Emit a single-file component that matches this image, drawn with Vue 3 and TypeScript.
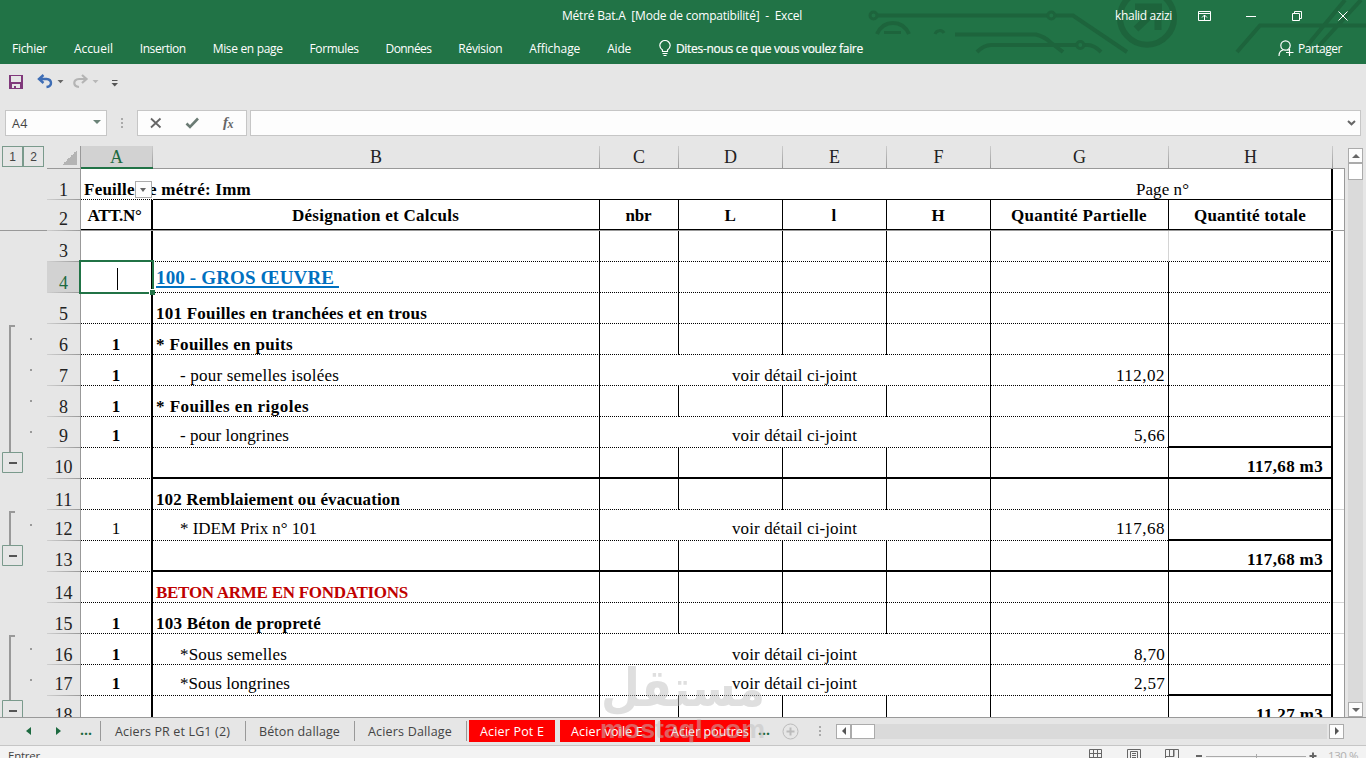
<script setup lang="ts">
import type { Directive } from 'vue'

// Spreads a label over the given width in pixels.
const vFit: Directive<HTMLElement, number> = {
  mounted(el, { value }) {
    if (!value) return
    const n = (el.textContent ?? '').length
    el.style.letterSpacing = `${(value - el.getBoundingClientRect().width) / n}px`
  },
}

interface Label { text: string; w: number }
interface Row {
  n: number
  a?: string
  aThin?: boolean
  b?: Label
  kind?: string
  merged?: boolean
  g?: Label
  h?: Label
  low?: boolean
  close?: boolean
  sum?: boolean
  tick?: boolean
}

const menus: Label[] = [
  { text: 'Fichier', w: 35 }, { text: 'Accueil', w: 39 }, { text: 'Insertion', w: 46 },
  { text: 'Mise en page', w: 70 }, { text: 'Formules', w: 49 }, { text: 'Données', w: 46 },
  { text: 'Révision', w: 44 }, { text: 'Affichage', w: 51 }, { text: 'Aide', w: 24 },
]
const columns = ['A', 'B', 'C', 'D', 'E', 'F', 'G', 'H']
const heads: Label[] = [
  { text: 'ATT.N°', w: 54 }, { text: 'Désignation et Calculs', w: 167 }, { text: 'nbr', w: 26 },
  { text: 'L', w: 11 }, { text: 'l', w: 5 }, { text: 'H', w: 13 },
  { text: 'Quantité Partielle', w: 136 }, { text: 'Quantité totale', w: 112 },
]
const rows: Row[] = [
  { n: 3 },
  { n: 4, b: { text: '100 - GROS ŒUVRE ', w: 183 }, kind: 'title' },
  { n: 5, b: { text: '101 Fouilles en tranchées et en trous', w: 271 }, kind: 'bold', tick: true },
  { n: 6, a: '1', b: { text: '* Fouilles en puits', w: 137 }, kind: 'bold', tick: true },
  { n: 7, a: '1', b: { text: '- pour semelles isolées', w: 159 }, kind: 'sub', merged: true, g: { text: '112,02', w: 49 }, tick: true },
  { n: 8, a: '1', b: { text: '* Fouilles en rigoles', w: 153 }, kind: 'bold', tick: true },
  { n: 9, a: '1', b: { text: '- pour longrines', w: 109 }, kind: 'sub', merged: true, g: { text: '5,66', w: 31 }, low: true, sum: true },
  { n: 10, h: { text: '117,68 m3', w: 76 }, low: true, close: true },
  { n: 11, b: { text: '102 Remblaiement ou évacuation', w: 244 }, kind: 'bold', tick: true },
  { n: 12, a: '1', aThin: true, b: { text: '* IDEM Prix n° 101', w: 137 }, kind: 'sub', merged: true, g: { text: '117,68', w: 49 }, low: true, sum: true },
  { n: 13, h: { text: '117,68 m3', w: 76 }, low: true, close: true },
  { n: 14, b: { text: 'BETON ARME EN FONDATIONS', w: 252 }, kind: 'red', tick: true },
  { n: 15, a: '1', b: { text: '103 Béton de propreté', w: 165 }, kind: 'bold', tick: true },
  { n: 16, a: '1', b: { text: '*Sous semelles', w: 107 }, kind: 'sub', merged: true, g: { text: '8,70', w: 31 }, tick: true },
  { n: 17, a: '1', b: { text: '*Sous longrines', w: 110 }, kind: 'sub', merged: true, g: { text: '2,57', w: 31 }, low: true, sum: true },
  { n: 18, h: { text: '11,27 m3', w: 67 }, low: true },
]
const tabs: Label[] = [
  { text: 'Aciers PR et LG1 (2)', w: 115 }, { text: 'Béton dallage', w: 81 }, { text: 'Aciers Dallage', w: 84 },
]
const redTabs: Label[] = [
  { text: 'Acier Pot E', w: 64 }, { text: 'Acier voile E', w: 72 }, { text: 'Acier poutres', w: 78 },
]
</script>

<template>
  <div class="app">
    <header class="ribbon">
      <svg class="circuit" width="506" height="64" viewBox="860 0 506 64">
        <g fill="none" stroke="#1d643c" stroke-width="4">
          <circle cx="873.5" cy="15.5" r="3.5" stroke-width="3" />
          <path d="M878 15.5H1047M1056 15.5H1073L1127 52" />
          <circle cx="1051.300" cy="15.500" r="3.500" stroke-width="3" />
          <path d="M877 34Q882 23 893 23T909 34" />
          <path d="M884 32.500H901M935 34A5 5 0 0 1 944 33" stroke-width="3" />
          <path d="M955 34.500H1036Q1045 37 1050 42L1063 52M977 52Q984 45 991 45H1076M1084 45H1088Q1094 45 1101 52" />
          <circle cx="1080.300" cy="45" r="3.500" stroke-width="3" />
          <path d="M1131 -4A27 27 0 1 0 1163 -4" stroke-width="6" />
          <path d="M1135 7H1162M1158 4V30M1157 9L1136 29" stroke-width="7" />
          <path d="M1237 52L1260 25.500H1366M1345 0L1306 47M1361 0L1318 47" />
        </g>
      </svg>
      <div class="titlebar">
        <div class="doc"><span v-fit="240">Métré Bat.A&nbsp; [Mode de compatibilité]&nbsp; -&nbsp; Excel</span></div>
        <div class="user"><span v-fit="57">khalid azizi</span></div>
        <svg class="win" width="170" height="30" viewBox="1190 0 170 30" fill="none" stroke="#fff">
          <path d="M1198.500 10.500H1210.500V19.500H1198.500ZM1198.500 12.500H1210.500M1204.500 19V14M1202 16.500L1204.500 14L1207 16.500" />
          <path d="M1246 15.500H1256M1292.500 12.500H1299.500V19.500H1292.500ZM1294.500 12V10.500H1301.500V17.500H1300M1338.500 10.500L1347.500 19.500M1347.500 10.500L1338.500 19.500" />
        </svg>
      </div>
      <nav class="menu">
        <span v-for="m in menus" :key="m.text" v-fit="m.w">{{ m.text }}</span>
        <svg class="bulb" width="12" height="17" viewBox="0 0 12 17" fill="none" stroke="#fff" stroke-width="1.200">
          <path d="M3.500 11.500V10Q.8 8 .8 5.500A5.200 5 0 0 1 11.200 5.500Q11.200 8 8.500 10V11.500ZM3.500 13.500H8.500M4.500 15.500H7.500" />
        </svg>
        <span class="ask" v-fit="187">Dites-nous ce que vous voulez faire</span>
        <svg class="person" width="16" height="17" viewBox="0 0 16 17" fill="none" stroke="#fff" stroke-width="1.200">
          <circle cx="7.500" cy="5.500" r="4.700" /><path d="M1 16Q1 11 5 10M9.500 9.800L10.500 10.500M11.500 9V16M8 12.500H15.500" />
        </svg>
        <span v-fit="44">Partager</span>
      </nav>
    </header>

    <div class="quick">
      <svg width="125" height="24" viewBox="0 70 125 24" fill="none">
        <path d="M9 75H23V89H9ZM11 76V82H21V76ZM12 84V88H14V86H16V88H20V84Z" fill="#80397b" fill-rule="evenodd" />
        <path d="M43.500 75L39 79L43.500 83M39.500 79H46.500Q51 79.500 51 83Q51 86.500 46.500 87" stroke="#3e6db5" stroke-width="2.400" />
        <path d="M57.500 80H63.500L60.500 83.200Z" fill="#666" />
        <path d="M82 75L86.500 79L82 83M86 79H79Q74.300 79.500 74.300 83Q74.300 86.500 79 87" stroke="#b4b4b4" stroke-width="2.200" />
        <path d="M92.500 80H98.500L95.500 83.200Z" fill="#b8b8b8" />
        <path d="M112 80.500H117.500" stroke="#555" /><path d="M111.500 83H118L114.700 86.500Z" fill="#555" />
      </svg>
    </div>

    <div class="formula">
      <div class="namebox"><span v-fit="16">A4</span><i class="caret"></i></div>
      <div class="grip"><i></i><i></i><i></i></div>
      <div class="fx">
        <svg width="108" height="24" viewBox="138 111 108 24" fill="none" stroke="#666">
          <path d="M151 118.500L160.500 127.500M160.500 118.500L151 127.500" stroke-width="1.800" />
          <path d="M186.500 123.500L190 127L198 118.500" stroke="#6b7b74" stroke-width="2.600" />
          <text x="223" y="127" class="fxt">f</text><text x="227.500" y="128" class="fxs">x</text>
        </svg>
      </div>
      <div class="input">
        <svg width="9" height="6" viewBox="0 0 9 6" fill="none" stroke="#666" stroke-width="2"><path d="M1 1L4.500 4.300L8 1" /></svg>
      </div>
    </div>

    <main class="work">
      <aside class="outline">
        <div class="levels"><span>1</span><span>2</span></div>
        <svg width="47" height="549" viewBox="0 168 47 549" fill="none">
          <path d="M0 230.500H47" stroke="#999" />
          <path d="M15 326H10V452M15 512H10V545M15 636H10V700" stroke="#999" stroke-width="2" />
          <path d="M30 339h2M30 370h2M30 401h2M30 432h2M30 525h2M30 649h2M30 680h2" stroke="#999" stroke-width="2" />
          <g fill="#e6e6e6" stroke="#7a9a8c"><path d="M2.500 452.500H22.500V472.500H2.500ZM2.500 545.500H22.500V565.500H2.500ZM2.500 700.500H22.500V720.500H2.500Z" /></g>
          <path d="M9 463H17M9 556H17M9 711H17" stroke="#555" stroke-width="2" />
        </svg>
      </aside>

      <div class="sheet">
        <div class="line colheads">
          <div class="corner"></div>
          <div v-for="c in columns" :key="c" class="colhead" :class="{ active: c === 'A' }">{{ c }}</div>
          <div></div>
        </div>
        <div class="line first">
          <div class="num">1</div>
          <div class="cell dot overflow bold">
            <span v-fit="167">Feuille de métré: Imm</span>
            <i class="filter"></i>
          </div>
          <div class="cell pageno"><span v-fit="53">Page n°</span></div>
          <div class="cell edge tick"></div>
        </div>
        <div class="line second">
          <div class="num">2</div>
          <div v-for="(h, i) in heads" :key="i" class="cell bold mid r" :class="{ thick: i === 0 || i === 7 }">
            <span v-fit="h.w">{{ h.text }}</span>
          </div>
          <div class="cell edge"></div>
        </div>
        <div v-for="r in rows" :key="r.n" class="line" :class="{ low: r.low }">
          <div class="num" :class="{ active: r.n === 4, n3: r.n === 3 }">{{ r.n }}</div>
          <div class="cell dot r thick mid" :class="{ bold: !r.aThin }">
            <span>{{ r.a }}</span>
            <i v-if="r.n === 4" class="selection"></i>
          </div>
          <div class="cell r" :class="[r.kind, r.close ? 'rule' : 'dot']"><span v-if="r.b" v-fit="r.b.w">{{ r.b.text }}</span></div>
          <div v-if="r.merged" class="cell r dot mid span4"><span v-fit="125">voir détail ci-joint</span></div>
          <template v-else>
            <div v-for="k in 4" :key="k" class="cell r" :class="r.close ? 'rule' : 'dot'"></div>
          </template>
          <div class="cell r right" :class="[r.close ? 'rule' : 'dot', { pale: r.n === 3 }]"><span v-if="r.g" v-fit="r.g.w">{{ r.g.text }}</span></div>
          <div class="cell r thick right bold total" :class="r.close || r.sum ? 'rule' : 'dot'"><span v-if="r.h" v-fit="r.h.w">{{ r.h.text }}</span></div>
          <div class="cell edge" :class="{ tick: r.tick }"></div>
        </div>
      </div>

      <div class="vscroll">
        <div class="btn"><i class="up"></i></div>
        <div class="thumb"></div>
        <div class="space"></div>
        <div class="btn"><i class="down"></i></div>
      </div>
    </main>

    <div class="tabs">
      <div class="arrows"><i class="prev"></i><i class="next"></i><b>...</b></div>
      <div v-for="t in tabs" :key="t.text" class="tab"><span v-fit="t.w">{{ t.text }}</span></div>
      <div class="reds">
        <div v-for="t in redTabs" :key="t.text" class="redtab"><span v-fit="t.w">{{ t.text }}</span></div>
      </div>
      <b class="more">...</b>
      <svg class="add" width="17" height="17" viewBox="0 0 17 17" fill="none" stroke="#bbb"><circle cx="8.500" cy="8.500" r="7.500" /><path d="M4.500 8.500H12.500M8.500 4.500V12.500" stroke-width="2" /></svg>
      <div class="grip"><i></i><i></i><i></i></div>
      <div class="hscroll">
        <div class="btn"><i class="left"></i></div>
        <div class="hthumb"></div>
        <div class="space"></div>
        <div class="btn"><i class="rightarrow"></i></div>
      </div>
    </div>

    <footer class="status">
      <span v-fit="32">Entrer</span>
      <svg width="235" height="13" viewBox="1085 746 235 13" fill="none" stroke="#666">
        <path d="M1089.500 749.500H1101.500V760M1089.500 749.500V760M1089.500 753.500H1101.500M1089.500 757.500H1101.500M1093.500 749V760M1097.500 749V760" />
        <path d="M1127.500 760V749.500H1140.500V760M1130.500 760V751.500H1137.500V760M1132 753.500H1136M1132 755.500H1136M1132 757.500H1136" />
        <path d="M1165.500 760V749.500H1178.500V760M1169.500 749V756.500M1173.500 749V756.500M1165.500 756.500H1174M1174 756.500V749" />
        <path d="M1196 756H1202M1309.500 756H1316.500M1313 752.500V760" stroke-width="2" />
        <path d="M1206 756.500H1306M1256.500 754V759" stroke="#aaa" />
      </svg>
      <span class="zoom" v-fit="30">130 %</span>
    </footer>

    <svg class="mark" width="170" height="90" viewBox="598 660 170 90">
      <text class="arabic" x="601" y="706" textLength="164" lengthAdjust="spacingAndGlyphs">مستقل</text>
      <text class="latin" x="600" y="738" textLength="165" lengthAdjust="spacingAndGlyphs">mostaql.com</text>
    </svg>
  </div>
</template>

<style>
body { margin: 0; overflow: hidden; }
</style>

<style scoped>
* { box-sizing: border-box; }
.app { position: relative; width: 1366px; height: 758px; overflow: hidden; display: flex; flex-direction: column; background: #e6e6e6; font: 12px "Open Sans", "Noto Sans", sans-serif; color: #444; }
.app span { white-space: pre; }
svg { display: block; flex: none; }
.ribbon { position: relative; height: 64px; background: #217346; color: #fff; flex: none; }
.circuit { position: absolute; right: 0; top: 0; }
.titlebar { position: relative; display: flex; align-items: center; height: 31px; padding-right: 6px; }
.doc { width: 553px; margin-left: 562px; }
.user { width: 75px; }
.menu { position: relative; display: flex; align-items: center; gap: 26.900px; height: 36px; padding: 0 24px 2px 12px; }
.bulb { margin: 0 -21.500px 0 .500px; }
.ask { margin-right: auto; -webkit-text-stroke: .2px #fff; }
.person { margin-right: -23px; }
.quick { height: 46px; padding-top: 6px; flex: none; }
.formula { display: flex; height: 26px; padding: 0 5px; flex: none; }
.namebox, .fx, .input { background: #fdfdfd; border: 1px solid #c6c6c6; }
.namebox { width: 102px; display: flex; align-items: center; justify-content: space-between; padding: 0 5px 0 6px; font-size: 12.500px; }
.caret { border: 4px solid transparent; border-top-color: #6b8378; border-bottom: 0; margin-bottom: 2px; }
.grip { width: 30px; display: flex; flex-direction: column; align-items: center; justify-content: center; gap: 2px; }
.grip i { width: 2px; height: 2px; background: #aaa; }
.fx { width: 110px; margin-right: 3px; }
.fxt, .fxs { font-family: "Liberation Serif", serif; font-style: italic; font-weight: bold; fill: #666; stroke: none; }
.fxt { font-size: 15px; }
.fxs { font-size: 12px; }
.input { flex: 1; display: flex; align-items: center; justify-content: flex-end; padding-right: 4px; }
.work { display: flex; height: 582px; padding-top: 10px; overflow: hidden; border-bottom: 1px solid #999; flex: none; }
.outline { width: 47px; flex: none; }
.levels { height: 22px; padding-left: 2px; display: flex; }
.levels span { width: 21px; height: 21px; border: 1px solid #7a9a8c; text-align: center; line-height: 20px; font-family: "Liberation Sans", sans-serif; font-size: 12px; }
.sheet { width: 1298px; flex: none; font: 17px "Liberation Serif", serif; color: #000; }
.line { display: grid; grid-template-columns: 34px 72px 447px 79px 104px 104px 104px 178px 164px 12px; grid-template-rows: 100%; height: 31px; }
.colheads { height: 23px; }
.corner { border-right: 1px solid #999; border-bottom: 1px solid #999; background: linear-gradient(135deg, transparent 50%, #b4b4b4 50%) 15px 4px / 15px 15px no-repeat; }
.colhead { border-bottom: 1px solid #999; text-align: center; font-size: 18px; line-height: 22px; padding-right: 1px; color: #222; background: linear-gradient(#ccc, #999) right / 1px 100% no-repeat; }
.colhead.active { border-bottom: 2px solid #217346; background-color: #d2d2d2; color: #1d6a40; }
.colheads > :last-child { border-bottom: 1px solid #999; }
.num { border-right: 1px solid #999; font-size: 18px; line-height: 20px; display: flex; justify-content: center; align-items: flex-end; color: #222; background: linear-gradient(90deg, #d0d0d0, #999) bottom / 100% 1px no-repeat; }
.num.active { background-color: #d2d2d2; color: #1d6a40; }
.num.n3 { padding-bottom: 1px; }
.low .num { padding-bottom: 2px; }
.cell { position: relative; min-width: 0; display: flex; align-items: flex-end; padding: 0 4px 0 3px; line-height: 20px; background: #fff; white-space: pre; --rule: 1px; --ink: #000; }
.low .cell { padding-bottom: 2px; }
.dot::before { content: ""; position: absolute; left: 0; right: 0; bottom: 0; height: 1px; background: repeating-linear-gradient(90deg, #000 0 1px, #fff 1px 2px); }
.rule::before { content: ""; position: absolute; left: 0; right: 0; bottom: 0; height: 2px; background: #000; }
.r::after { content: ""; position: absolute; right: 0; top: 0; bottom: 0; width: var(--rule); background: var(--ink); }
.thick { --rule: 2px; }
.pale { --ink: #d4d4d4; }
.cell.mid { justify-content: center; padding-right: 5px; }
.right { justify-content: flex-end; padding-right: 4px; }
.cell.total { padding-right: 10px; }
.bold, .title, .red { font-weight: bold; }
.span4 { grid-column: span 4; }
.cell.sub { padding-left: 27px; }
.cell.title { color: #0070c0; font-size: 19px; padding-bottom: 5px; }
.title span { border-bottom: 2px solid #0070c0; line-height: 16px; }
.cell.red { color: #c00000; }
.cell.edge { border-right: 1px solid #999; padding: 0; }
.cell.tick { background: linear-gradient(#d4d4d4, #d4d4d4) bottom / 100% 1px no-repeat #fff; }
.overflow { overflow: visible; z-index: 2; }
.cell.pageno { grid-column: span 7; border-bottom: 1px solid #000; border-right: 2px solid #000; justify-content: flex-end; padding-right: 142px; line-height: 18px; }
.filter { position: absolute; left: 54px; top: 12px; width: 17px; height: 17px; background: #fdfdfd; border: 1px solid #ababab; }
.filter::after { content: ""; position: absolute; left: 4px; top: 6px; border: 3.500px solid transparent; border-top: 4px solid #666; border-bottom: 0; }
.second .cell { padding-bottom: 4px; border-bottom: 1px solid #999; box-shadow: inset 0 -1px #000; }
.second .cell.edge { box-shadow: none; }
.second .cell:nth-child(2) { padding-right: 8px; }
.second .num { padding-bottom: 2px; }
.selection { position: absolute; left: -2px; top: -2px; width: 75px; height: 34px; border: 2px solid #217346; z-index: 3; }
.selection::before { content: ""; position: absolute; left: 36px; top: 6px; width: 1px; height: 22px; background: #000; }
.selection::after { content: ""; position: absolute; right: -3px; bottom: -3px; width: 5px; height: 5px; background: #217346; box-shadow: -1px -1px #fff; }
.vscroll { margin: 2px 3px 0 3px; width: 15px; display: flex; flex-direction: column; }
.btn { width: 15px; height: 15px; flex: none; background: #fdfdfd; border: 1px solid #ababab; display: flex; align-items: center; justify-content: center; }
.thumb { height: 17px; background: #fff; border: 1px solid #ababab; }
.space { flex: 1; background: #dadada; }
.up, .down { border: 4px solid transparent; }
.up { border-bottom: 4px solid #666; border-top: 0; }
.down { border-top: 4px solid #666; border-bottom: 0; }
.left, .rightarrow, .prev, .next { border: 4px solid transparent; }
.left { border-right-color: #555; border-left: 0; }
.rightarrow { border-left-color: #555; border-right: 0; }
.tabs { height: 28px; display: flex; align-items: center; padding-bottom: 1px; border-bottom: 1px solid #c6c6c6; flex: none; font-size: 12.500px; }
.arrows { width: 101px; height: 20px; display: flex; align-items: center; padding-left: 26px; border-right: 1px solid #999; }
.prev { border-right: 5px solid #1d6a40; border-left: 0; margin-right: 25px; }
.next { border-left: 5px solid #1d6a40; border-right: 0; margin-right: 19px; }
.arrows b, .more { color: #1d6a40; font-size: 14px; line-height: 14px; margin-bottom: 3px; }
.tab { height: 20px; padding: 0 15px 0 14px; border-right: 1px solid #999; display: flex; align-items: center; }
.tab + .tab { padding: 0 14px 0 13px; }
.reds { display: flex; width: 282px; overflow: hidden; margin-left: 2px; }
.redtab { height: 22px; background: #f00; color: #fff; padding: 0 11px; display: flex; align-items: center; flex: none; margin-right: 5px; position: relative; }
.redtab:nth-child(2) { padding-right: 12px; }
.redtab:last-child { width: 90px; padding-right: 0; }
.more { margin-left: 7px; width: 24px; }
.add { margin-right: 5px; }
.tabs .grip { width: 32px; }
.hscroll { display: flex; width: 508px; height: 15px; }
.hthumb { width: 24px; background: #fff; border: 1px solid #ababab; }
.hscroll .space { margin-right: 2px; }
.status { height: 13px; background: #f3f3f3; display: flex; padding: 0 8px; font-size: 11.500px; line-height: 19px; flex: none; overflow: hidden; justify-content: space-between; }
.status span { display: block; }
.status svg { margin-left: auto; margin-right: 8px; }
.zoom { color: #b0b0b0; }
.mark { position: absolute; left: 598px; top: 660px; opacity: .5; z-index: 5; }
.mark text { fill: #c0c0c0; }
.arabic { font: bold 52px "DejaVu Sans", sans-serif; direction: ltr; }
.latin { font: bold 25px "Liberation Sans", sans-serif; }
</style>
